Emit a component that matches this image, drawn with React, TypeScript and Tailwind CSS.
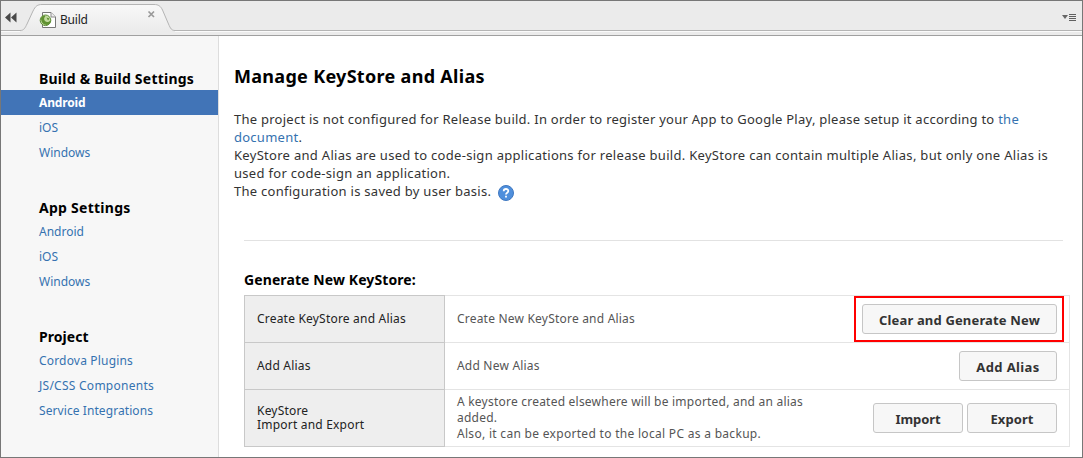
import React from "react";

type Group = { title: string; spacing: string; items: { label: string; active?: boolean; spacing?: string }[] };

const groups: Group[] = [
  {
    title: "Build & Build Settings",
    spacing: "tracking-[0.23px]",
    items: [{ label: "Android", active: true, spacing: "tracking-[-0.14px]" }, { label: "iOS" }, { label: "Windows" }],
  },
  {
    title: "App Settings",
    spacing: "tracking-[0.26px]",
    items: [{ label: "Android" }, { label: "iOS" }, { label: "Windows" }],
  },
  {
    title: "Project",
    spacing: "tracking-[0.04px]",
    items: [
      { label: "Cordova Plugins", spacing: "tracking-[0.18px]" },
      { label: "JS/CSS Components", spacing: "tracking-[0.26px]" },
      { label: "Service Integrations", spacing: "tracking-[0.08px]" },
    ],
  },
];

function TabBar() {
  return (
    <header className="relative h-[35px] shrink-0 border-b border-[#a0a0a0] bg-[#ebebeb]">
      <svg className="absolute inset-0" width="1081" height="34" viewBox="1 1 1081 34">
        <defs>
          <linearGradient id="tab" x1="0" y1="0" x2="0" y2="1">
            <stop offset="0" stopColor="#f8f8f8" />
            <stop offset="1" stopColor="#ebebeb" />
          </linearGradient>
        </defs>
        <path d="M0 31.5H1082" stroke="#fafafa" />
        <path d="M20 32V30.5C24 30.5 25 28 27 24L33 11C35.500 6 37.500 4.500 42 4.500H154C158.500 4.500 160.500 6 162.500 10L168.500 24C170.500 28.500 171.500 30.500 175 30.500V32Z" fill="url(#tab)" />
        <path d="M0 30.5H20C24 30.5 25 28 27 24L33 11C35.500 6 37.500 4.500 42 4.500H154C158.500 4.500 160.500 6 162.500 10L168.500 24C170.500 28.500 171.500 30.500 175 30.500H1082" fill="none" stroke="#b4b4b4" />
        <path d="M5 17.500L10.500 12.500V22.500ZM11 17.500L16.500 12.500V22.500Z" fill="#484848" />
        <path d="M148.500 11.500L154 17M154 11.500L148.500 17" stroke="#999" strokeWidth="1.700" />
        <path d="M42.500 12.500H51L55.500 17V27.500H42.500Z" fill="#fff" stroke="#777" />
        <path d="M51 12.500V17H55.500" fill="#eee" stroke="#8a8a8a" />
        <circle cx="45.500" cy="20.300" r="5.300" fill="#c3dba0" stroke="#5b8a35" />
        <path d="M41 18C41 22 43 25 47 25C50 24.500 51 22 50.500 20C49 22.500 46.500 22.500 45 21C43.500 19.500 44 17.500 45.500 16C43.500 15.500 42 16.500 41 18Z" fill="#5f9130" />
        <path d="M46.500 17.500L49.500 18.500L48 20.500Z" fill="#5f9130" />
        <path d="M1062 15H1068L1065 19Z" fill="#666" />
        <path d="M1069 14.500H1076M1069 16.500H1076M1069 18.500H1076M1069 20.500H1076" stroke="#606060" />
      </svg>
      <div className="relative flex h-[34px] items-start pt-[10px] pl-[59px] text-[12px] leading-[18px] tracking-[-0.2px] text-[#222]">Build</div>
    </header>
  );
}

function Sidebar() {
  return (
    <nav className="flex w-[218px] shrink-0 flex-col gap-[30px] border-r border-[#ddd] bg-[#f7f7f7] pt-[30px]">
      {groups.map((g) => (
        <section key={g.title}>
          <h2 className={`h-6 pl-[38px] text-[14px] leading-[25px] font-bold text-black ${g.spacing}`}>{g.title}</h2>
          <ul>
            {g.items.map((i) => (
              <li
                key={i.label}
                className={`h-[25px] pl-[38px] text-[12px] leading-[25px] ${i.spacing ?? ""} ${i.active ? "bg-[#4174b7] font-bold text-white" : "text-[#3572b0]"}`}
              >
                {i.label}
              </li>
            ))}
          </ul>
        </section>
      ))}
    </nav>
  );
}

function Button({ children, className }: { children: React.ReactNode; className: string }) {
  return (
    <button className={`h-[30px] shrink-0 rounded-[3px] border border-[#c6c6c6] bg-[#f7f7f7] pt-px text-[13px] leading-[28px] font-bold text-[#333] ${className}`}>
      {children}
    </button>
  );
}

function Row({ label, text, height, children }: { label: React.ReactNode; text: React.ReactNode; height: string; children: React.ReactNode }) {
  return (
    <div className={`flex ${height}`}>
      <div className="flex w-[201px] shrink-0 items-center border-x border-t border-[#c8c8c8] bg-[#eee] pl-3 text-[12px] leading-[14px] tracking-[0.2px] text-[#222]">
        <div>{label}</div>
      </div>
      <div className="flex flex-1 items-center justify-between border-t border-r border-[#e4e4e4] pr-3 pl-3 text-[12px] leading-[16px] text-[#555]">
        <div className="whitespace-nowrap">{text}</div>
        {children}
      </div>
    </div>
  );
}

export default function App() {
  return (
    <div className="flex h-[458px] w-[1083px] flex-col overflow-hidden border border-[#777] bg-white font-['Noto_Sans',sans-serif]">
      <TabBar />
      <div className="flex min-h-0 flex-1">
        <Sidebar />
        <main className="flex-1 pt-[28px] pl-[15px]">
          <h1 className="h-6 text-[18px] leading-[24px] font-bold tracking-[0.3px] text-black">Manage KeyStore and Alias</h1>
          <div className="mt-[22px] text-[13px] leading-[18px] whitespace-nowrap text-[#333]">
            <p className="tracking-[0.256px]">
              The project is not configured for Release build. In order to register your App to Google Play, please setup it according to{" "}
              <a className="text-[#3572b0]">the<br />document</a>.
            </p>
            <p className="tracking-[0.296px]">
              KeyStore and Alias are used to code-sign applications for release build. KeyStore can contain multiple Alias, but only one Alias is
              <br />
              used for code-sign an application.
            </p>
            <p className="flex h-[18px] items-center tracking-[0.27px]">
              The configuration is saved by user basis.
              <svg className="mt-[4px] ml-[7px]" width="16" height="16" viewBox="0 0 16 16">
                <circle cx="8" cy="8" r="7.500" fill="#4f8fdc" stroke="#3f78c0" />
                <path d="M5.700 6.200C5.700 3.300 10.300 3.300 10.300 6C10.300 7.700 8 7.700 8 9.500M8 10.800V12.500" fill="none" stroke="#fff" strokeWidth="1.800" />
              </svg>
            </p>
          </div>
          <div className="mt-[40px] ml-[10px] h-px w-[819px] bg-[#e2e2e2]" />
          <h2 className="mt-[29px] ml-[10px] h-[25px] text-[14px] leading-[20px] font-bold tracking-[0.1px] text-black">Generate New KeyStore:</h2>
          <div className="relative ml-[10px] w-[826px]">
            <Row height="h-[47px]" label="Create KeyStore and Alias" text={<span className="tracking-[0.205px]">Create New KeyStore and Alias</span>}>
              <Button className="w-[195px] tracking-[0.16px]">Clear and Generate New</Button>
            </Row>
            <Row height="h-[47px]" label="Add Alias" text={<span className="tracking-[0.205px]">Add New Alias</span>}>
              <Button className="w-[98px] tracking-[0.4px]">Add Alias</Button>
            </Row>
            <Row
              height="h-[57px]"
              label={<>KeyStore<br />Import and Export</>}
              text={
                <>
                  <p className="tracking-[0.222px]">A keystore created elsewhere will be imported, and an alias<br />added.</p>
                  <p className="tracking-[0.3px]">Also, it can be exported to the local PC as a backup.</p>
                </>
              }
            >
              <div className="flex gap-1">
                <Button className="w-[90px] tracking-[-0.1px]">Import</Button>
                <Button className="w-[90px] tracking-[0.1px]">Export</Button>
              </div>
            </Row>
            <div className="flex h-px"><div className="w-[201px] bg-[#c8c8c8]" /><div className="flex-1 bg-[#e4e4e4]" /></div>
            <div className="pointer-events-none absolute top-px left-[610px] h-[46px] w-[210px] border-2 border-[#ff0000]" />
          </div>
        </main>
      </div>
    </div>
  );
}
